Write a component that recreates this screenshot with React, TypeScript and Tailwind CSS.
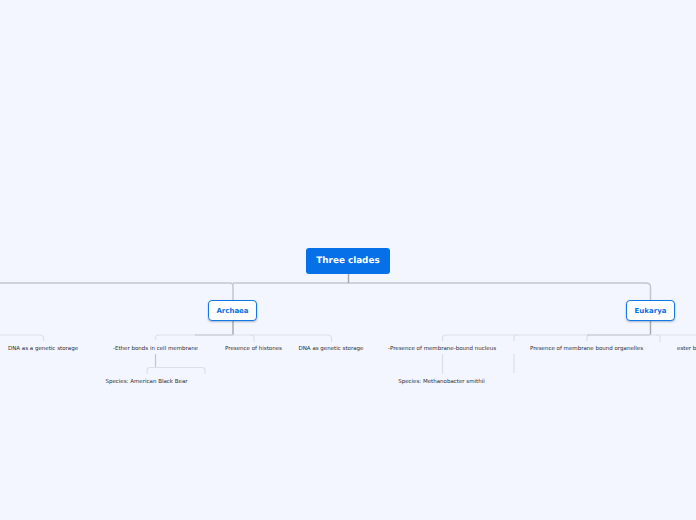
const font = { fontFamily: '"DejaVu Sans", sans-serif' };

function Leaf({ x, y, children }: { x: number; y: number; children: string }) {
  return (
    <div
      className="absolute -translate-x-1/2 whitespace-nowrap text-[5.5px] leading-[8px] text-[#2a2d35]"
      style={{ left: x, top: y }}
    >
      {children}
    </div>
  );
}

function Branch({ x, label }: { x: number; label: string }) {
  return (
    <div
      className="absolute top-[300px] flex h-[21px] w-[49px] items-center justify-center rounded-[4px] border-[1.5px] border-[#1278e6] bg-white pt-px text-[7px] font-bold text-[#0a70e6] shadow-[0_1px_2px_rgba(30,60,110,0.35)]"
      style={{ left: x }}
    >
      {label}
    </div>
  );
}

export default function App() {
  return (
    <div className="relative h-[520px] w-[696px] overflow-hidden bg-[#f3f6fe] [text-rendering:geometricPrecision]" style={font}>
      <svg className="absolute inset-0" width="696" height="520" fill="none">
        <g stroke="#c3c6cf" strokeWidth="1.5">
          <path d="M0 283H230Q233 283 233 286V300" />
          <path d="M233 283H646Q650.5 283 650.5 287V300" />
          <path d="M348.5 274V283" stroke="#a9abb0" />
          <path d="M233 321V335" stroke="#a9abb0" />
          <path d="M650.5 321V335" stroke="#a9abb0" />
        </g>
        <g stroke="#dcdfe8" strokeWidth="1.2">
          <path d="M0 335H40Q43.5 335 43.5 338V341" />
          <path d="M155.5 340V338Q155.5 335 159 335H328Q331.5 335 331.5 338V342" />
          <path d="M250 335Q254 335 254 338V342" />
          <path d="M442.5 341V338Q442.5 335 446 335H696" />
          <path d="M514 341V338Q514 335 517 335" />
          <path d="M587 341V338Q587 335 590 335" />
          <path d="M656 335Q660 335 660 338V342" />
          <path d="M442.5 354V374" />
          <path d="M514 354V373" />
          <path d="M147 374V370Q147 367.5 150 367.5H202Q205 367.5 205 370V374" />
        </g>
        <path d="M155.5 354V367" stroke="#c3c6cf" strokeWidth="1.2" />
        <path d="M195 335H233M587 335H650" stroke="#c3c6cf" strokeWidth="1.2" />
      </svg>

      <div className="absolute left-[306px] top-[248px] flex h-[26px] w-[84px] items-center justify-center rounded-[3px] bg-[#0570e8] pt-[2px] text-[8.8px] font-bold text-white">
        Three clades
      </div>
      <Branch x={208} label="Archaea" />
      <Branch x={626} label="Eukarya" />

      <Leaf x={43} y={345}>DNA as a genetic storage</Leaf>
      <Leaf x={155.5} y={345}>-Ether bonds in cell membrane</Leaf>
      <Leaf x={253.5} y={345}>Presence of histones</Leaf>
      <Leaf x={331} y={345}>DNA as genetic storage</Leaf>
      <Leaf x={442} y={345}>-Presence of membrane-bound nucleus</Leaf>
      <Leaf x={586.5} y={345}>Presence of membrane bound organelles</Leaf>
      <Leaf x={146.5} y={378}>Species: American Black Bear</Leaf>
      <Leaf x={441.5} y={378}>Species: Methanobacter smithii</Leaf>
      <div className="absolute left-[677px] top-[345px] whitespace-nowrap text-[5.5px] leading-[8px] text-[#2a2d35]">
        ester bonds
      </div>
    </div>
  );
}
